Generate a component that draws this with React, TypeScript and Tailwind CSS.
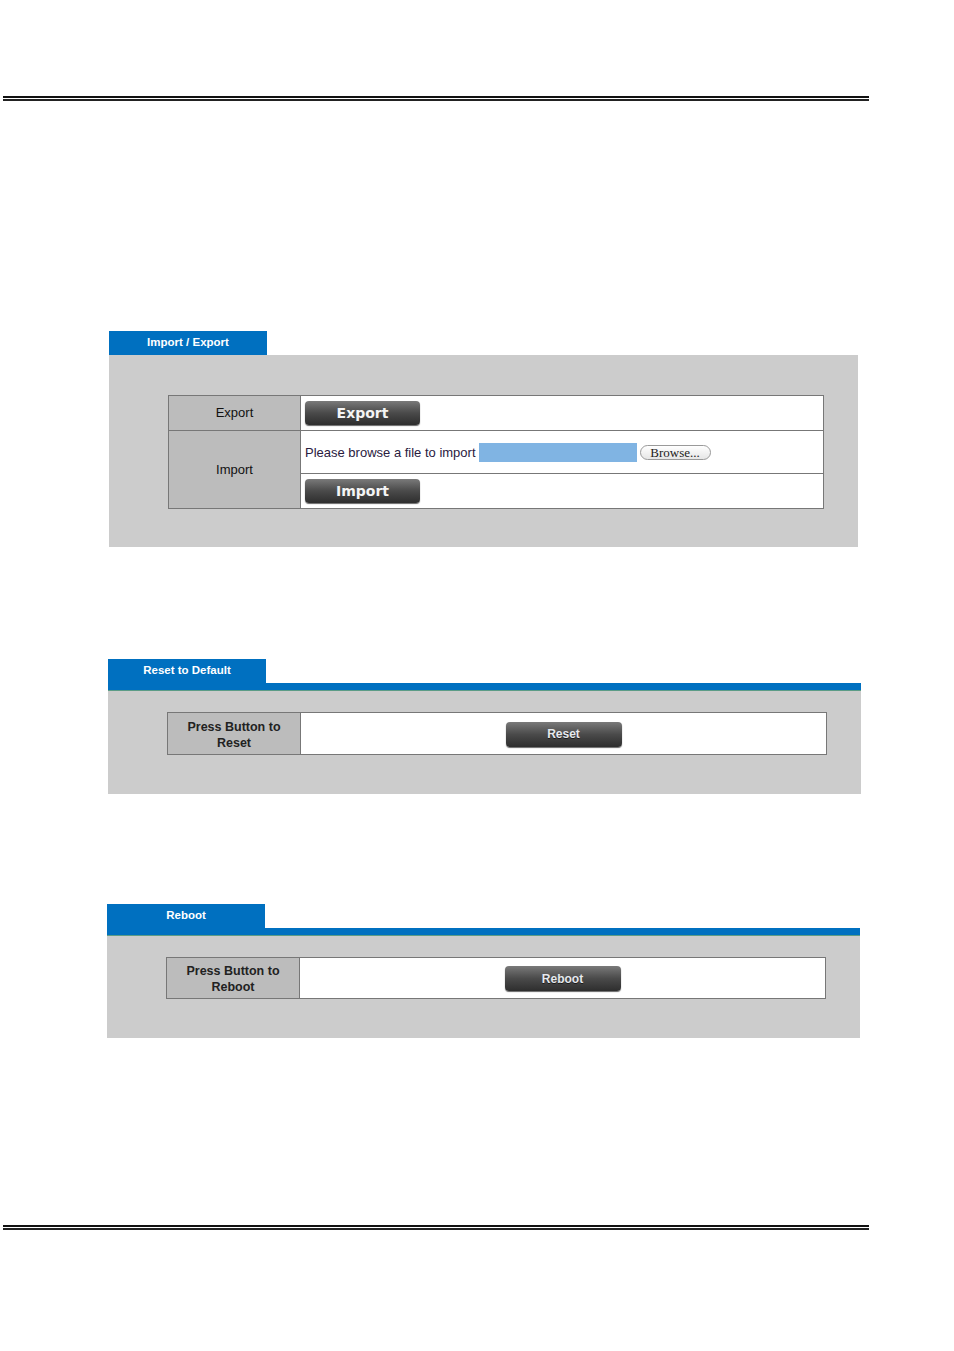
import React from "react"

const sans = { fontFamily: '"Liberation Sans", Arial, sans-serif' }

function DoubleRule() {
  return (
    <div className="ml-[3px] w-[866px]">
      <div className="h-[2px] bg-[#111]" />
      <div className="mt-[1px] h-[2px] bg-[#222]" />
    </div>
  )
}

function DarkButton({ label, big = false }: { label: string; big?: boolean }) {
  return (
    <button
      className={
        big
          ? "h-[24px] w-[115px] rounded-[4px] bg-gradient-to-b from-[#7a7a7a] via-[#4a4a4a] to-[#2e2e2e] text-[14px] font-bold text-[#f4f4f4] shadow-[0_1px_1px_rgba(0,0,0,0.6)]"
          : "h-[25px] w-[116px] rounded-[4px] bg-gradient-to-b from-[#7a7a7a] via-[#4a4a4a] to-[#2e2e2e] text-[12px] font-bold text-[#e6e9ee] shadow-[0_1px_1px_rgba(0,0,0,0.6)]"
      }
      style={
        big
          ? { fontFamily: '"DejaVu Sans", Verdana, sans-serif' }
          : { ...sans, textShadow: "0 1px 0 rgba(0,0,0,0.6)" }
      }
    >
      {label}
    </button>
  )
}

function Tab({ title }: { title: string }) {
  return (
    <div
      className="flex h-[24px] w-[158px] items-center justify-center bg-[#0070c0] text-[11.5px] font-bold text-white"
      style={sans}
    >
      {title}
    </div>
  )
}

function ImportExport() {
  return (
    <div className="ml-[109px] mt-[230px] w-[749px]">
      <Tab title="Import / Export" />
      <div className="h-[192px] bg-[#cccccc] pl-[59px] pt-[40px]">
        <table className="w-[656px] border-collapse border border-[#666] text-[13px]" style={sans}>
          <tbody>
            <tr className="h-[35px]">
              <td className="w-[132px] border border-[#777] bg-[#bcbcbc] text-center text-[#111]">Export</td>
              <td className="border border-[#777] bg-white pl-[4px]">
                <DarkButton label="Export" big />
              </td>
            </tr>
            <tr className="h-[43px]">
              <td rowSpan={2} className="border border-[#777] bg-[#bcbcbc] text-center text-[#111]">
                Import
              </td>
              <td className="border border-[#777] bg-white pl-[4px]">
                <div className="flex items-center pt-[1px]">
                  <span className="text-[13px] text-[#2a2040]">Please browse a file to import</span>
                  <span className="ml-[3px] h-[19px] w-[158px] bg-[#80b4e3]" />
                  <span
                    className="ml-[3px] flex h-[15px] w-[71px] items-center justify-center rounded-full border border-[#9a9a9a] bg-gradient-to-b from-white to-[#e6e6e6] text-[13px] text-[#222]"
                    style={{ fontFamily: '"Liberation Serif", "Times New Roman", serif' }}
                  >
                    Browse...
                  </span>
                </div>
              </td>
            </tr>
            <tr className="h-[35px]">
              <td className="border border-[#777] bg-white pl-[4px]">
                <DarkButton label="Import" big />
              </td>
            </tr>
          </tbody>
        </table>
      </div>
    </div>
  )
}

function ActionSection({
  title,
  label,
  button,
  left,
  top,
  panelH,
  tableH,
}: {
  title: string
  label: string
  button: string
  left: string
  top: string
  panelH: string
  tableH: string
}) {
  return (
    <div className={`${left} ${top} w-[753px]`}>
      <Tab title={title} />
      <div className="h-[8px] border-b border-[#5c9c86] bg-[#0070c0]" />
      <div className={`${panelH} bg-[#cccccc] pl-[59px] pt-[21px]`}>
        <table className="w-[660px] border-collapse border border-[#666] text-[12.5px]" style={sans}>
          <tbody>
            <tr className={tableH}>
              <td className="w-[133px] border border-[#777] bg-[#bcbcbc] pt-[2px] text-center font-bold leading-[16px] text-[#222]">
                Press Button to
                <br />
                {label}
              </td>
              <td className="border border-[#777] bg-white text-center">
                <div className="flex justify-center pt-[1px]">
                  <DarkButton label={button} />
                </div>
              </td>
            </tr>
          </tbody>
        </table>
      </div>
    </div>
  )
}

export default function App() {
  return (
    <div className="h-[1351px] w-[954px] overflow-hidden bg-white pt-[96px]">
      <DoubleRule />
      <ImportExport />
      <ActionSection
        title="Reset to Default"
        label="Reset"
        button="Reset"
        left="ml-[108px]"
        top="mt-[112px]"
        panelH="h-[103px]"
        tableH="h-[42px]"
      />
      <ActionSection
        title="Reboot"
        label="Reboot"
        button="Reboot"
        left="ml-[107px]"
        top="mt-[110px]"
        panelH="h-[102px]"
        tableH="h-[41px]"
      />
      <div className="mt-[187px]">
        <DoubleRule />
      </div>
    </div>
  )
}
